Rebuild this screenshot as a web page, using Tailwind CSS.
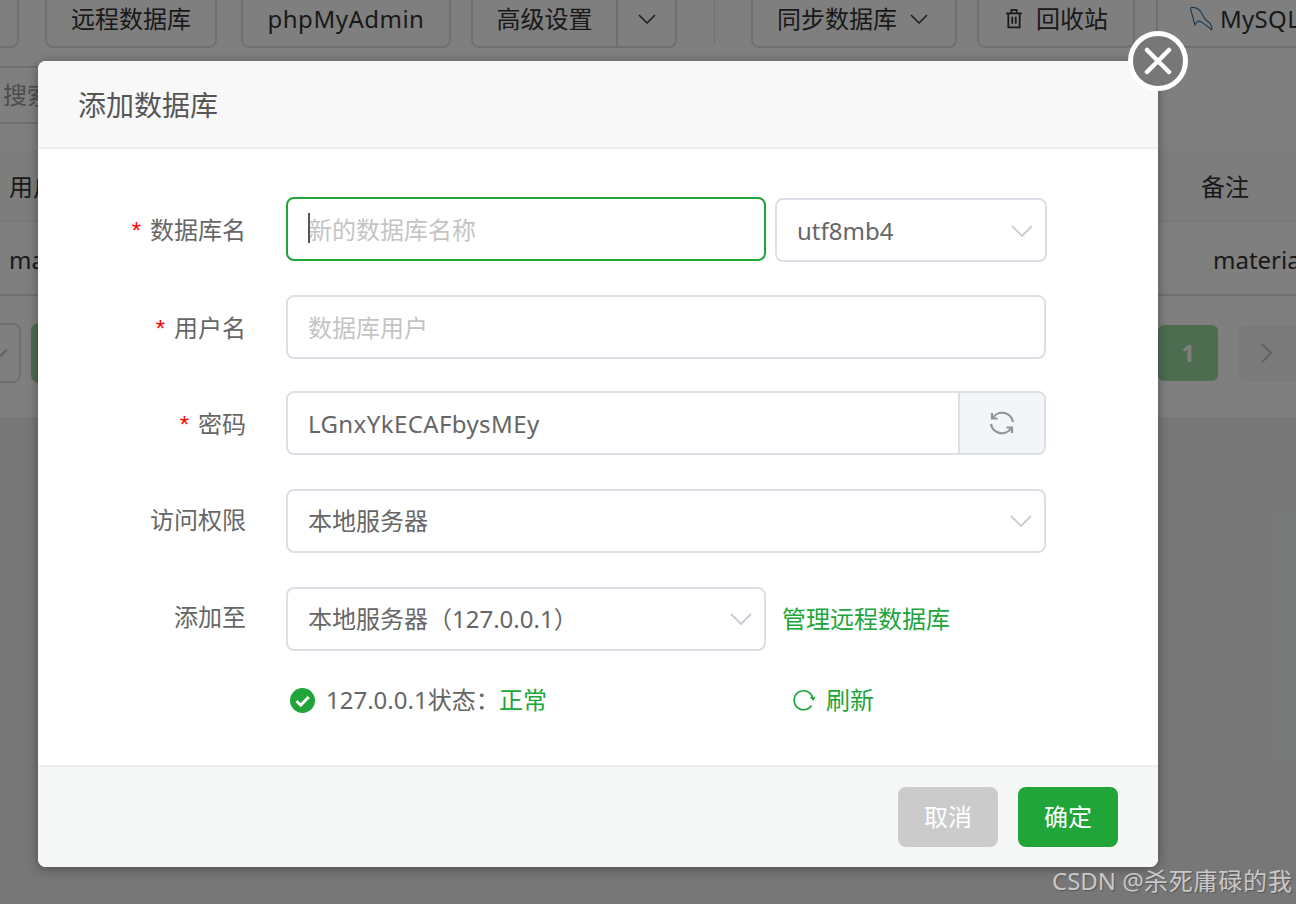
<!DOCTYPE html>
<html lang="zh-CN">
<head>
<meta charset="UTF-8">
<script src="https://cdn.jsdelivr.net/npm/@tailwindcss/browser@4"></script>
<title>添加数据库</title>
</head>
<body class="relative w-[1296px] h-[904px] overflow-hidden bg-[#eeeff0] text-[24px] leading-[32px] text-[#333] font-['Noto_Sans','Noto_Sans_CJK_SC',sans-serif]">

<!-- page behind the dialog -->
<div class="h-[417px] bg-white overflow-hidden">
  <div class="flex h-[48px] items-end">
    <div class="w-[19px] h-[60px] shrink-0 border-2 border-l-0 border-[#dcdfe6] rounded-r-lg"></div>
    <div class="ml-[26px] w-[172px] h-[60px] shrink-0 pb-[11px] flex items-end justify-center border-2 border-[#dcdfe6] rounded-lg">远程数据库</div>
    <div class="ml-[24px] w-[210px] h-[60px] shrink-0 pb-[11px] flex items-end justify-center border-2 border-[#dcdfe6] rounded-lg tracking-[0.5px]">phpMyAdmin</div>
    <div class="ml-[20px] w-[206px] h-[60px] shrink-0 flex border-2 border-[#dcdfe6] rounded-lg">
      <div class="w-[145px] pb-[11px] flex items-end justify-center border-r-2 border-[#dcdfe6]">高级设置</div>
      <div class="flex-1 pb-[22px] flex items-end justify-center">
        <svg class="w-[18px] h-[10px]" viewBox="0 0 18 10" fill="none" stroke="#333" stroke-width="1.5"><path d="M1 1l8 8 8-8"/></svg>
      </div>
    </div>
    <div class="ml-[37px] w-[1px] h-[44px] shrink-0 self-start bg-[#dcdfe6]"></div>
    <div class="ml-[36px] w-[206px] h-[60px] shrink-0 pb-[11px] pr-[3px] flex items-end justify-center gap-[13px] border-2 border-[#dcdfe6] rounded-lg">同步数据库
      <svg class="w-[18px] h-[10px] mb-[11px]" viewBox="0 0 18 10" fill="none" stroke="#333" stroke-width="1.5"><path d="M1 1l8 8 8-8"/></svg>
    </div>
    <div class="ml-[20px] w-[158px] h-[60px] shrink-0 pb-[11px] flex items-end justify-center gap-[12px] border-2 border-[#dcdfe6] rounded-lg">
      <svg class="w-[20px] h-[21px] mb-[6px]" viewBox="0 0 20 24" fill="none" stroke="#333" stroke-width="2"><path d="M1 6h18M7 6V2h6v4M3.500 6v16h13V6M8 10v8M12 10v8"/></svg>回收站
    </div>
    <div class="ml-[21px] w-[200px] h-[60px] shrink-0 pl-[32px] pb-[11px] flex items-end gap-[7px] border-2 border-[#dcdfe6] rounded-lg tracking-[0.3px]">
      <svg class="w-[23px] h-[24px] mb-[4px]" viewBox="0 0 23 24" fill="none" stroke="#2f6f9f" stroke-width="1.100"><path d="M0.500 0.500C5 0 9 2 11 5c2 4 3 7 6 9 2 1 5 4 5 9M0.500 1C1 6 3 9 3.500 13l1.500 5c1-2 2-4 4-4 3 1 7 4 13 9"/></svg>MySQL
    </div>
  </div>
  <div class="mt-[18px] w-[300px] h-[58px] pl-[3px] flex items-center border-y-2 border-[#dcdfe6] text-[#999]">搜索</div>
  <div class="mt-[26px] flex h-[72px] items-center justify-between bg-[#fafafa] border-b-2 border-[#ebeef5] pl-[9px] pr-[47px] pt-[3px]">
    <span>用户名</span><span>备注</span>
  </div>
  <div class="flex h-[74px] items-center justify-between border-b-2 border-[#dcdfe6] pl-[9px] pt-[3px]">
    <span>material</span><span class="w-[83px] overflow-hidden">material</span>
  </div>
  <div class="mt-[29px] flex h-[56px] justify-between">
    <div class="flex gap-[10px] -mt-[2px]">
      <div class="w-[21px] h-[60px] flex items-center border-2 border-l-0 border-[#dcdfe6] rounded-r-lg">
        <svg class="w-[8px] h-[8px]" viewBox="0 0 8 8" fill="none" stroke="#c0c4cc" stroke-width="2"><path d="M0 7.500L7 0.500"/></svg>
      </div>
      <div class="w-[60px] h-[60px] bg-[#9ad8a0] rounded-lg"></div>
    </div>
    <div class="flex gap-[20px]">
      <div class="w-[60px] h-[56px] flex items-center justify-center bg-[#9ad8a0] rounded-md text-white font-bold">1</div>
      <div class="w-[58px] h-[56px] flex items-center justify-center bg-[#f4f4f5] rounded-l-md">
        <svg class="w-[12px] h-[20px]" viewBox="0 0 12 20" fill="none" stroke="#c0c4cc" stroke-width="2"><path d="M1 1l9 9-9 9"/></svg>
      </div>
    </div>
  </div>
</div>

<!-- mask -->
<div class="absolute inset-0 bg-black/50"></div>

<!-- dialog -->
<div class="absolute left-[38px] top-[61px] w-[1120px] h-[806px] flex flex-col bg-white rounded-lg shadow-[0_2px_12px_rgba(0,0,0,0.35)] text-[#666]">
  <div class="h-[88px] shrink-0 pl-[40px] pt-[1px] flex items-center bg-[#f8f8f8] border-b-2 border-[#eeeeee] rounded-t-lg text-[28px] text-[#555]">添加数据库</div>

  <div class="flex-1 flex flex-col">
    <!-- 数据库名 -->
    <div class="mt-[48px] flex h-[64px] items-center">
      <label class="w-[208px] pt-[2px] text-right"><span class="text-[#ff0000] mr-[9px] font-['Liberation_Sans']">*</span>数据库名</label>
      <div class="relative ml-[40px] w-[480px] h-[64px]">
        <input class="w-full h-full pl-[20px] border-2 border-[#20a53a] rounded-lg outline-none placeholder:text-[#c4c4c4]" placeholder="新的数据库名称">
        <span class="absolute left-[22px] top-[16px] w-[2px] h-[30px] bg-[#555]"></span>
      </div>
      <div class="ml-[9px] w-[272px] h-[64px] pl-[20px] pr-[12px] pt-[1px] flex items-center justify-between border-2 border-[#dcdfe6] rounded-lg translate-y-[1px]">utf8mb4
        <svg class="w-[22px] h-[12px]" viewBox="0 0 22 12" fill="none" stroke="#c8ccd3" stroke-width="1.800"><path d="M1 1l10 10L21 1"/></svg>
      </div>
    </div>
    <!-- 用户名 -->
    <div class="mt-[34px] flex h-[64px] items-center">
      <label class="w-[208px] pt-[2px] text-right"><span class="text-[#ff0000] mr-[9px] font-['Liberation_Sans']">*</span>用户名</label>
      <input class="ml-[40px] w-[760px] h-[64px] pl-[20px] border-2 border-[#dcdfe6] rounded-lg outline-none placeholder:text-[#c4c4c4]" placeholder="数据库用户">
    </div>
    <!-- 密码 -->
    <div class="mt-[32px] flex h-[64px] items-center">
      <label class="w-[208px] pt-[2px] text-right"><span class="text-[#ff0000] mr-[9px] font-['Liberation_Sans']">*</span>密码</label>
      <div class="ml-[40px] w-[760px] h-[64px] flex border-2 border-[#dcdfe6] rounded-lg overflow-hidden">
        <input class="flex-1 min-w-0 pl-[20px] pt-[2px] outline-none text-[#666] tracking-[0.4px]" value="LGnxYkECAFbysMEy">
        <div class="w-[86px] flex items-center justify-center bg-[#f4f5f9] border-l-2 border-[#dcdfe6]">
          <svg class="w-[26px] h-[26px]" viewBox="0 0 26 26" fill="none" stroke="#909399" stroke-width="2.200"><path d="M3.500 8.500A11 11 0 0 1 24 12"/><path d="M2 14A11 11 0 0 0 22.500 17.500"/><path d="M3 3V8.500H8.500M23 23V17.500H17.500"/></svg>
        </div>
      </div>
    </div>
    <!-- 访问权限 -->
    <div class="mt-[34px] flex h-[64px] items-center">
      <label class="w-[208px] pb-[2px] text-right">访问权限</label>
      <div class="ml-[40px] w-[760px] h-[64px] pl-[20px] pr-[12px] flex items-center justify-between border-2 border-[#dcdfe6] rounded-lg">本地服务器
        <svg class="w-[22px] h-[12px]" viewBox="0 0 22 12" fill="none" stroke="#c8ccd3" stroke-width="1.800"><path d="M1 1l10 10L21 1"/></svg>
      </div>
    </div>
    <!-- 添加至 -->
    <div class="mt-[34px] flex h-[64px] items-center">
      <label class="w-[208px] pb-[4px] text-right">添加至</label>
      <div class="ml-[40px] w-[480px] h-[64px] pl-[20px] pr-[12px] flex items-center justify-between border-2 border-[#dcdfe6] rounded-lg">本地服务器（127.0.0.1）
        <svg class="w-[22px] h-[12px]" viewBox="0 0 22 12" fill="none" stroke="#c8ccd3" stroke-width="1.800"><path d="M1 1l10 10L21 1"/></svg>
      </div>
      <a class="ml-[16px] text-[#20a53a]">管理远程数据库</a>
    </div>
    <!-- 状态 -->
    <div class="mt-[33px] ml-[252px] flex h-[32px] items-center">
      <svg class="w-[25px] h-[25px]" viewBox="0 0 25 25"><circle cx="12.500" cy="12.500" r="12.500" fill="#20a53a"/><path d="M6.500 13l4.200 4.200 8-8.200" fill="none" stroke="#fff" stroke-width="3"/></svg>
      <span class="ml-[11px] w-[173px] whitespace-nowrap">127.0.0.1状态：</span>
      <span class="text-[#20a53a]">正常</span>
      <svg class="ml-[246px] w-[22px] h-[22px]" viewBox="0 0 22 22" fill="none" stroke="#20a53a" stroke-width="1.600"><path d="M20 10A9.500 9.500 0 1 0 18.500 16.500"/><path d="M17.500 8l2.500 2.500 2-2.500"/></svg>
      <span class="ml-[11px] text-[#20a53a]">刷新</span>
    </div>
  </div>

  <div class="h-[102px] shrink-0 pr-[40px] flex items-center justify-end gap-[20px] bg-[#f6f8f8] border-t-2 border-[#eeeeee] rounded-b-lg">
    <button class="w-[100px] h-[60px] bg-[#cbcbcb] rounded-lg text-white">取消</button>
    <button class="w-[100px] h-[60px] bg-[#20a53a] rounded-lg text-white">确定</button>
  </div>
</div>

<!-- close button -->
<div class="absolute left-[1128px] top-[31px] w-[60px] h-[60px] flex items-center justify-center bg-[#777] border-[5px] border-white rounded-full">
  <svg class="w-[28px] h-[28px]" viewBox="0 0 28 28" fill="none" stroke="#fff" stroke-width="4.500" stroke-linecap="round"><path d="M3 3l22 22M25 3L3 25"/></svg>
</div>

<!-- watermark -->
<div class="absolute left-[1052px] top-[865px] whitespace-nowrap text-[#c8c8c8] [text-shadow:1px_1px_1px_#555]">CSDN @<span class="tracking-[0.8px]">杀死庸碌的我</span></div>

</body>
</html>
